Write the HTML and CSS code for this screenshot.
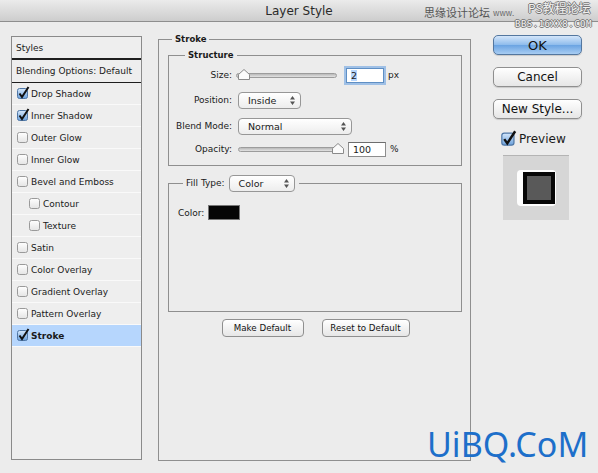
FILE: index.html
```html
<!DOCTYPE html>
<html lang="en">
<head>
    <meta charset="UTF-8">
    <title>Layer Style</title>
    <link rel="stylesheet" href="styles.css">
</head>
<body>

    <svg class="defs" width="0" height="0">
        <defs>
            <linearGradient id="cbOn" x1="0" y1="0" x2="0" y2="1">
                <stop offset="0" stop-color="#d6e8fb"/>
                <stop offset="1" stop-color="#6aa0dc"/>
            </linearGradient>
            <linearGradient id="cbOff" x1="0" y1="0" x2="0" y2="1">
                <stop offset="0" stop-color="#ffffff"/>
                <stop offset="1" stop-color="#e4e4e4"/>
            </linearGradient>
        </defs>
    </svg>

    <div class="titlebar">Layer Style</div>

    <!-- site watermark in the title bar -->
    <div class="stamp">
        <span class="stamp-cn">思缘设计论坛</span>
        <span class="stamp-www">www.</span>
        <span class="stamp-ps">PS教程论坛</span>
        <span class="stamp-bbs">BBS.16XX8.COM</span>
    </div>

    <div class="main">

        <!-- Styles list -->
        <div class="list">
            <div class="row head">Styles</div>
            <div class="row blend">Blending Options: Default</div>
            <div class="row"><svg class="cb" viewBox="0 0 14 14"><rect x="1.5" y="2.5" width="10" height="10" rx="2" fill="url(#cbOn)" stroke="#4f77a6"/><path d="M3.5 7.5 L6 11 L12.5 1" stroke="#111" stroke-width="2" fill="none"/></svg>Drop Shadow</div>
            <div class="row"><svg class="cb" viewBox="0 0 14 14"><rect x="1.5" y="2.5" width="10" height="10" rx="2" fill="url(#cbOn)" stroke="#4f77a6"/><path d="M3.5 7.5 L6 11 L12.5 1" stroke="#111" stroke-width="2" fill="none"/></svg>Inner Shadow</div>
            <div class="row"><svg class="cb" viewBox="0 0 14 14"><rect x="1.5" y="2.5" width="10" height="10" rx="2" fill="url(#cbOff)" stroke="#9a9a9a"/></svg>Outer Glow</div>
            <div class="row"><svg class="cb" viewBox="0 0 14 14"><rect x="1.5" y="2.5" width="10" height="10" rx="2" fill="url(#cbOff)" stroke="#9a9a9a"/></svg>Inner Glow</div>
            <div class="row"><svg class="cb" viewBox="0 0 14 14"><rect x="1.5" y="2.5" width="10" height="10" rx="2" fill="url(#cbOff)" stroke="#9a9a9a"/></svg>Bevel and Emboss</div>
            <div class="row sub"><svg class="cb" viewBox="0 0 14 14"><rect x="1.5" y="2.5" width="10" height="10" rx="2" fill="url(#cbOff)" stroke="#9a9a9a"/></svg>Contour</div>
            <div class="row sub"><svg class="cb" viewBox="0 0 14 14"><rect x="1.5" y="2.5" width="10" height="10" rx="2" fill="url(#cbOff)" stroke="#9a9a9a"/></svg>Texture</div>
            <div class="row"><svg class="cb" viewBox="0 0 14 14"><rect x="1.5" y="2.5" width="10" height="10" rx="2" fill="url(#cbOff)" stroke="#9a9a9a"/></svg>Satin</div>
            <div class="row"><svg class="cb" viewBox="0 0 14 14"><rect x="1.5" y="2.5" width="10" height="10" rx="2" fill="url(#cbOff)" stroke="#9a9a9a"/></svg>Color Overlay</div>
            <div class="row"><svg class="cb" viewBox="0 0 14 14"><rect x="1.5" y="2.5" width="10" height="10" rx="2" fill="url(#cbOff)" stroke="#9a9a9a"/></svg>Gradient Overlay</div>
            <div class="row"><svg class="cb" viewBox="0 0 14 14"><rect x="1.5" y="2.5" width="10" height="10" rx="2" fill="url(#cbOff)" stroke="#9a9a9a"/></svg>Pattern Overlay</div>
            <div class="row selected"><svg class="cb" viewBox="0 0 14 14"><rect x="1.5" y="2.5" width="10" height="10" rx="2" fill="url(#cbOn)" stroke="#4f77a6"/><path d="M3.5 7.5 L6 11 L12.5 1" stroke="#111" stroke-width="2" fill="none"/></svg>Stroke</div>
        </div>

        <!-- Stroke settings -->
        <fieldset class="group stroke">
            <legend>Stroke</legend>

            <fieldset class="group structure">
                <legend>Structure</legend>

                <div class="field size-row">
                    <span class="label">Size:</span>
                    <div class="slider short">
                        <div class="track"></div>
                        <svg class="thumb thumb-left" viewBox="0 0 12 11"><path d="M0.5 10.5 V5.5 L6 0.5 L11.5 5.5 V10.5 Z" fill="#fbfbfb" stroke="#8a8a8a"/></svg>
                    </div>
                    <div class="input focus"><span class="sel">2</span></div>
                    <span class="unit">px</span>
                </div>

                <div class="field pos-row">
                    <span class="label">Position:</span>
                    <div class="popup w-pos">Inside<svg class="arrows" viewBox="0 0 5 9"><path d="M2.5 0 L5 3.5 H0 Z M2.5 9 L5 5.5 H0 Z" fill="#555"/></svg></div>
                </div>

                <div class="field blend-row">
                    <span class="label">Blend Mode:</span>
                    <div class="popup w-blend">Normal<svg class="arrows" viewBox="0 0 5 9"><path d="M2.5 0 L5 3.5 H0 Z M2.5 9 L5 5.5 H0 Z" fill="#555"/></svg></div>
                </div>

                <div class="field opacity-row">
                    <span class="label">Opacity:</span>
                    <div class="slider">
                        <div class="track"></div>
                        <svg class="thumb thumb-right" viewBox="0 0 12 11"><path d="M0.5 10.5 V5.5 L6 0.5 L11.5 5.5 V10.5 Z" fill="#fbfbfb" stroke="#8a8a8a"/></svg>
                    </div>
                    <div class="input">100</div>
                    <span class="unit">%</span>
                </div>
            </fieldset>

            <fieldset class="group fill">
                <legend>
                    <span class="legend-label">Fill Type:</span>
                    <div class="popup w-fill">Color<svg class="arrows" viewBox="0 0 5 9"><path d="M2.5 0 L5 3.5 H0 Z M2.5 9 L5 5.5 H0 Z" fill="#555"/></svg></div>
                </legend>
                <div class="color-row">
                    <span>Color:</span>
                    <div class="swatch"></div>
                </div>
            </fieldset>

            <div class="defaults">
                <button class="btn small">Make Default</button>
                <button class="btn small">Reset to Default</button>
            </div>
        </fieldset>

        <!-- Dialog buttons -->
        <div class="side">
            <button class="btn big primary">OK</button>
            <button class="btn big">Cancel</button>
            <button class="btn big">New Style...</button>
            <div class="preview-check">
                <svg class="cb big-cb" viewBox="0 0 14 14"><rect x="1.5" y="2.5" width="10" height="10" rx="2" fill="url(#cbOn)" stroke="#4f77a6"/><path d="M3.5 7.5 L6 11 L12.5 1" stroke="#111" stroke-width="2" fill="none"/></svg>
                Preview
            </div>
            <div class="preview">
                <div class="preview-glow">
                    <div class="preview-layer"></div>
                </div>
            </div>
        </div>
    </div>

    <div class="watermark">UiBQ.CoM</div>

</body>
</html>
```

FILE: styles.css
```css
/* General Styles */
body {
    margin: 0;
    width: 598px;
    height: 473px;
    overflow: hidden;
    position: relative;
    background: #ececec;
    font-family: "DejaVu Sans", "Noto Sans CJK SC", sans-serif;
    font-size: 9px;
    color: #1a1a1a;
}

.defs {
    position: absolute;
}

/* Title bar */
.titlebar {
    height: 21px;
    line-height: 22px;
    text-align: center;
    font-size: 12px;
    color: #2a2a2a;
    background: linear-gradient(#ebebeb, #cdcdcd);
    border-bottom: 1px solid #8e8e8e;
}

/* Watermark stamps */
.stamp {
    position: absolute;
    top: 0;
    left: 424px;
    width: 174px;
    height: 30px;
    font-family: "Noto Sans CJK SC", sans-serif;
}

.stamp-cn {
    position: absolute;
    left: 0;
    top: 6px;
    font-size: 11px;
    line-height: 12px;
    color: #555;
}

.stamp-www {
    position: absolute;
    left: 69px;
    top: 8px;
    font-size: 8px;
    line-height: 10px;
    color: #666;
}

.stamp-ps,
.stamp-bbs {
    position: absolute;
    color: #f2f2f2;
    text-shadow: -1px 0 #777, 1px 0 #777, 0 -1px #777, 0 1px #777;
}

.stamp-ps {
    left: 104px;
    top: 1px;
    font-size: 12px;
    line-height: 14px;
}

.stamp-bbs {
    left: 91px;
    top: 19px;
    font-size: 9px;
    line-height: 10px;
    font-family: "DejaVu Sans Mono", monospace;
    letter-spacing: 0.5px;
}

.main {
    display: flex;
    align-items: flex-start;
    padding: 14px 0 0 11px;
}

/* Styles list */
.list {
    width: 129px;
    height: 422px;
    border: 1px solid #8a8a8a;
    background: #eeeeee;
}

.row {
    display: flex;
    align-items: center;
    height: 22px;
    box-sizing: border-box;
    padding-left: 4px;
    border-bottom: 1px solid #f9f9f9;
    white-space: nowrap;
}

.row.head {
    height: 23px;
    border-bottom: 2px solid #1e1e1e;
}

.row.blend {
    height: 23px;
    border-bottom: 1px solid #1e1e1e;
}

.row.sub {
    padding-left: 16px;
}

.row.selected {
    background: #b6d6fd;
    font-weight: bold;
}

.cb {
    width: 14px;
    height: 14px;
    flex-shrink: 0;
    margin-right: 1px;
    margin-top: -2px;
}

/* Group boxes */
.group {
    margin: 0;
    min-width: 0;
    border: 1px solid #8f8f8f;
    box-sizing: border-box;
}

.group > legend {
    font-weight: bold;
    font-size: 8.5px;
    line-height: 12px;
    padding: 0 3px;
}

.stroke {
    width: 313px;
    height: 428px;
    margin: -3px 0 0 16px;
    padding: 4px 8px 0 9px;
}

.stroke > legend {
    margin-left: 4px;
}

.structure {
    height: 117px;
    padding: 5px 0 0 0;
}

.structure > legend {
    margin-left: 16px;
}

.field {
    display: flex;
    align-items: center;
    height: 18px;
}

.pos-row {
    margin-top: 7px;
}

.blend-row {
    margin-top: 8px;
}

.opacity-row {
    margin-top: 5px;
}

.label {
    width: 63px;
    text-align: right;
    padding-right: 6px;
    flex-shrink: 0;
}

/* Sliders */
.slider {
    position: relative;
    width: 101px;
    height: 18px;
    display: flex;
    align-items: center;
}

.slider.short {
    margin-left: -2px;
}

.track {
    width: 100%;
    height: 3px;
    border: 1px solid #9c9c9c;
    border-radius: 3px;
    background: linear-gradient(#b9b9b9, #e2e2e2);
}

.thumb {
    position: absolute;
    top: 3px;
    width: 12px;
    height: 11px;
}

.thumb-left {
    left: 2px;
}

.thumb-right {
    right: -5px;
}

.input {
    box-sizing: border-box;
    width: 38px;
    height: 15px;
    margin-left: 9px;
    padding-left: 4px;
    line-height: 13px;
    font-size: 9.5px;
    background: #fff;
    border: 1px solid #8d8d8d;
    border-top-color: #6d6d6d;
}

.input.focus {
    border-color: #5f8fc4;
    box-shadow: 0 0 0 2px #9fc0e6;
}

.sel {
    background: #b6d6fd;
}

.unit {
    margin-left: 4px;
}

/* Popups */
.popup {
    display: flex;
    align-items: center;
    justify-content: space-between;
    box-sizing: border-box;
    height: 17px;
    padding: 0 5px 0 9px;
    font-size: 9.5px;
    font-weight: normal;
    background: linear-gradient(#ffffff, #ededed);
    border: 1px solid #979797;
    border-radius: 4px;
}

.arrows {
    width: 5px;
    height: 9px;
}

.w-pos {
    width: 63px;
}

.w-blend {
    width: 114px;
}

.w-fill {
    width: 66px;
}

/* Fill type */
.fill {
    height: 137px;
    margin-top: 9px;
    padding: 0 0 0 9px;
}

.fill > legend {
    display: flex;
    align-items: center;
    gap: 4px;
    margin-left: 5px;
    padding: 0 4px 0 3px;
    line-height: 17px;
    font-weight: normal;
    font-size: 9px;
}

.color-row {
    display: flex;
    align-items: center;
    gap: 4px;
    margin-top: 13px;
}

.swatch {
    width: 30px;
    height: 13px;
    background: #050505;
    border: 1px solid #777;
}

/* Buttons */
.defaults {
    display: flex;
    justify-content: center;
    gap: 18px;
    margin-top: 7px;
    padding-left: 1px;
}

.btn {
    font-family: "DejaVu Sans", sans-serif;
    color: #111;
    background: linear-gradient(#ffffff, #e6e6e6);
    border: 1px solid #8f8f8f;
    border-radius: 4px;
    padding: 0;
    cursor: pointer;
}

.btn.small {
    height: 18px;
    font-size: 8.7px;
}

.btn.small:first-child {
    width: 82px;
}

.btn.small:last-child {
    width: 88px;
}

.side {
    display: flex;
    flex-direction: column;
    width: 89px;
    margin: -1px 0 0 22px;
}

.btn.big {
    width: 89px;
    height: 20px;
    margin-bottom: 12px;
    font-size: 12px;
    border-radius: 5px;
    box-shadow: 0 1px 1px rgba(0, 0, 0, 0.15);
}

.btn.primary {
    background: linear-gradient(#d4e6fa, #8dbbec 50%, #6aa3e2 51%, #a8cdf3);
    border-color: #54779f;
    font-size: 13px;
}

.preview-check {
    display: flex;
    align-items: center;
    margin: 0 0 0 7px;
    font-size: 12px;
    height: 16px;
}

.big-cb {
    width: 17px;
    height: 17px;
    margin-right: 2px;
}

.preview {
    width: 66px;
    height: 65px;
    margin: 8px 0 0 10px;
    box-sizing: border-box;
    background: #d6d6d6;
    border-top: 1px solid #b4b4b4;
    display: flex;
    align-items: center;
    justify-content: center;
}

.preview-glow {
    width: 38px;
    height: 36px;
    border-radius: 4px;
    background: #fdfdfd;
    display: flex;
    justify-content: flex-end;
    align-items: center;
    padding-right: 1px;
}

.preview-layer {
    width: 24px;
    height: 24px;
    background: #595959;
    border: 4px solid #060606;
}

/* Site watermark */
.watermark {
    position: absolute;
    left: 427px;
    top: 421px;
    font-family: "Noto Sans", sans-serif;
    font-size: 34px;
    line-height: 46px;
    color: #1d6fca;
}
```
